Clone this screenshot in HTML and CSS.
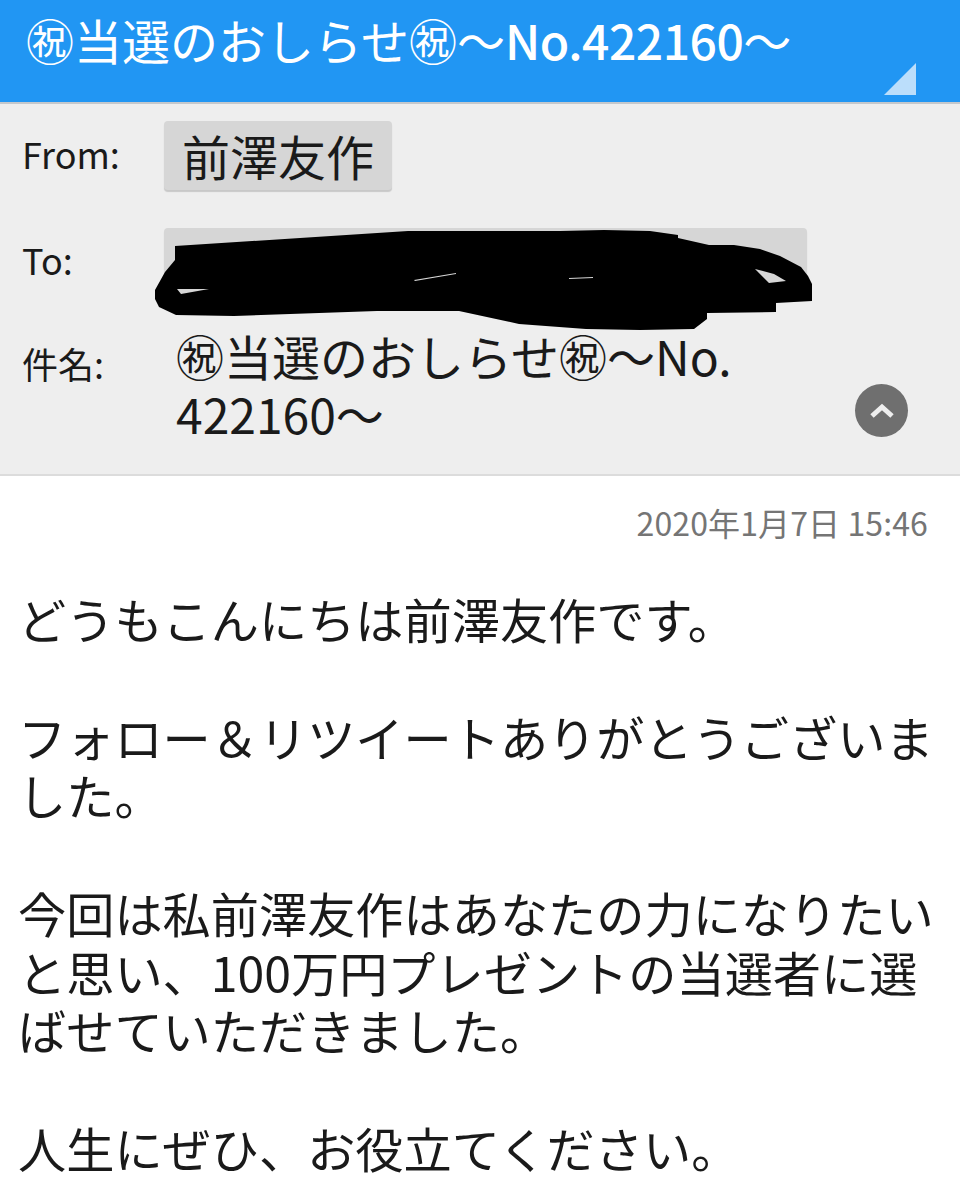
FILE: index.html
```html
<!DOCTYPE html>
<html lang="ja">
<head>
    <meta charset="UTF-8">
    <meta name="viewport" content="width=device-width, initial-scale=1.0">
    <title>当選のおしらせ</title>
    <link rel="stylesheet" href="styles.css">
</head>
<body>
    <header class="title-bar">
        <h1>㊗当選のおしらせ㊗～<span class="title-no">No.422160</span>～</h1>
        <span class="corner"></span>
    </header>

    <section class="details">
        <div class="row row-from">
            <span class="label">From:</span>
            <span class="chip">前澤友作</span>
        </div>
        <div class="row row-to">
            <span class="label">To:</span>
            <span class="chip chip-wide"></span>
            <!-- blacked out by hand -->
            <svg class="scribble" width="960" height="120" viewBox="0 220 960 120">
                <path fill-rule="evenodd" d="M175 244 L300 236 L408 229 L560 229 L604 228 L650 229 L678 233 L678 236 L709 243 L734 243 L760 247 L780 254 L801 265 L808 274 L812 282 L812 299 L776 301 L776 310 L707 311 L707 317 L694 327 L640 328 L586 327 L519 322 L459 309 L377 309 L234 314 L176 313 L159 305 L155 297 L155 288 L165 270 L175 258 Z
                    M177 287 L209 287 L181 292 Z
                    M755 267 L769 281 L786 279 L774 272 Z
                    M414 278 L456 271 L456 272 L415 279 Z
                    M569 276 L593 275 L593 276 L569 277 Z"/>
            </svg>
        </div>
        <div class="row row-subject">
            <span class="label">件名:</span>
            <span class="subject">㊗当選のおしらせ㊗～No.<br>422160～</span>
            <button class="collapse" aria-label="閉じる">
                <svg width="26" height="16" viewBox="0 0 26 16">
                    <path d="M3 13 L13 4 L23 13" fill="none" stroke="#eeeeee" stroke-width="5"/>
                </svg>
            </button>
        </div>
    </section>

    <main class="message">
        <div class="date">2020年1月7日 15:46</div>
        <p>どうもこんにちは前澤友作です。</p>
        <p>フォロー＆リツイートありがとうございました。</p>
        <p>今回は私前澤友作はあなたの力になりたいと思い、100万円プレゼントの当選者に選ばせていただきました。</p>
        <p>人生にぜひ、お役立てください。</p>
    </main>
</body>
</html>
```

FILE: styles.css
```css
body {
    font-family: "Noto Sans CJK JP", "Noto Sans", sans-serif;
    margin: 0;
    padding: 0;
    background-color: #fff;
    color: #1a1a1a;
    height: 1200px;
    overflow: hidden;
}
.title-bar {
    background: #2196f3;
    color: white;
    height: 102px;
    padding-left: 26px;
    border-bottom: 2px solid #c4c8cc;
    box-sizing: content-box;
    position: relative;
}
h1 {
    margin: 0;
    font-size: 48px;
    font-weight: 400;
    line-height: 78px;
    white-space: nowrap;
}
.title-no {
    font-weight: 500;
    letter-spacing: -0.5px;
}
.corner {
    position: absolute;
    right: 44px;
    top: 63px;
    width: 32px;
    height: 32px;
    background: #bbdefb;
    clip-path: polygon(100% 0, 100% 100%, 0 100%);
}
.details {
    background: #eeeeee;
    height: 370px;
    border-bottom: 2px solid #dcdcdc;
    padding-left: 22px;
    position: relative;
}
.row {
    display: flex;
    align-items: flex-start;
}
.label {
    width: 142px;
    font-size: 36px;
    line-height: 50px;
    flex-shrink: 0;
}
.row-from {
    padding-top: 17px;
}
.row-from .label {
    padding-top: 7px;
}
.row-to {
    padding-top: 38px;
}
.row-to .label {
    padding-top: 6px;
}
.row-subject {
    padding-top: 29px;
}
.row-subject .label {
    padding-top: 12px;
}
.chip {
    display: block;
    background: #d6d6d6;
    border-radius: 4px;
    box-shadow: 0 2px 1px #c8c8c8;
    height: 69px;
    line-height: 69px;
    padding: 0 18px;
    font-size: 48px;
}
.chip-wide {
    width: 607px;
}
.scribble {
    position: absolute;
    left: 0;
    top: 118px;
}
.subject {
    font-size: 48px;
    line-height: 58px;
    margin-left: 12px;
}
.collapse {
    position: absolute;
    left: 855px;
    top: 280px;
    width: 53px;
    height: 53px;
    border: none;
    border-radius: 50%;
    background: #6f6f6f;
    padding: 0;
    display: flex;
    align-items: center;
    justify-content: center;
}
.message {
    padding: 0 18px;
}
.date {
    text-align: right;
    font-size: 32px;
    letter-spacing: 0.12px;
    line-height: 48px;
    color: #757575;
    padding: 22px 14px 0 0;
}
.message p {
    margin: 0 0 59.6px;
    font-size: 48.2px;
    line-height: 58.4px;
}
.message .date + p {
    margin-top: 43px;
}
```
